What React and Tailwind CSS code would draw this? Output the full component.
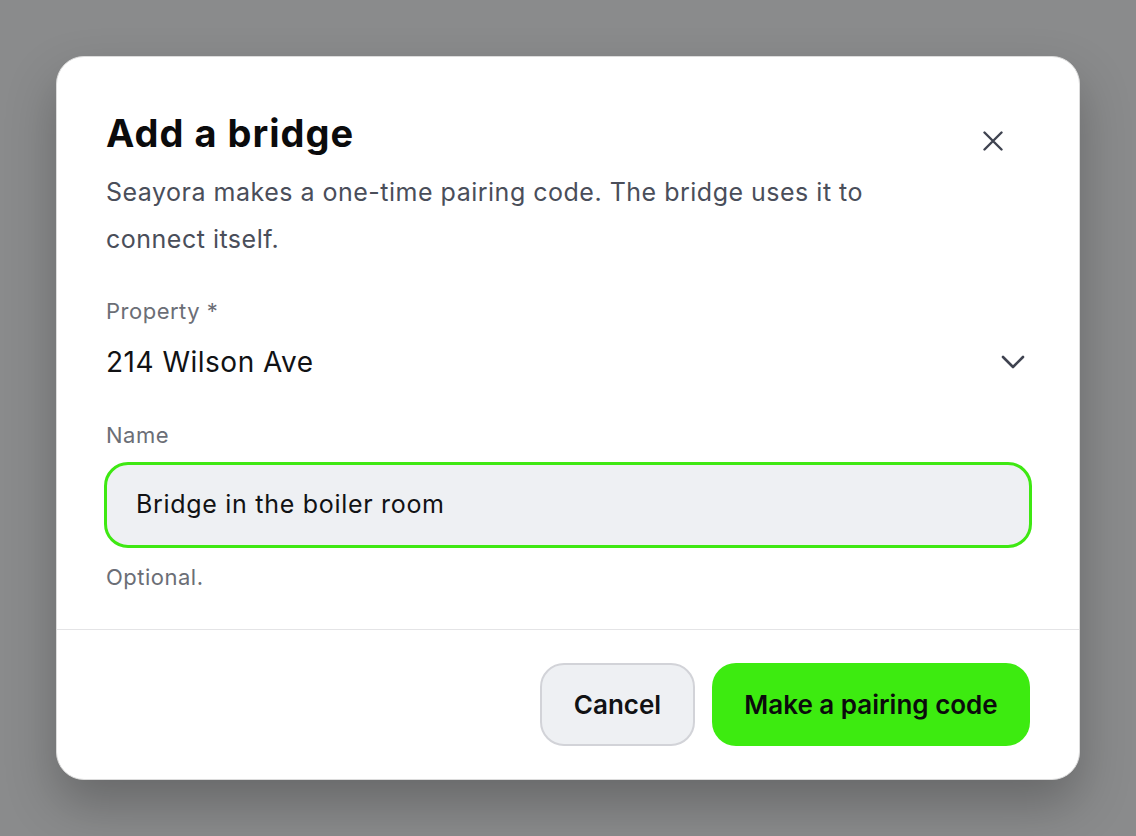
export default function App() {
  return (
    <div
      className="min-h-screen w-full bg-[#8a8b8c] flex items-start justify-center pt-[56px]"
      style={{ fontFamily: "Inter, 'Noto Sans', sans-serif" }}
    >
      <div className="w-[1024px] rounded-[28px] border border-[#dcdcdc] bg-white shadow-[0_24px_50px_rgba(0,0,0,0.25)]">
        <div className="px-[49px] pt-[52px] pb-[38px]">
          <div className="flex items-start justify-between">
            <h1 className="text-[38px] leading-[48px] font-bold text-[#0b0b0c] tracking-[1px]">
              Add a bridge
            </h1>
            <button type="button" className="mt-[22px] mr-[27px] text-[#3f4350]">
              <svg width="20" height="20" viewBox="0 0 20 20" fill="none">
                <path d="M1.5 1.5L18.5 18.5M18.5 1.5L1.5 18.5" stroke="currentColor" strokeWidth="2.4" strokeLinecap="round" />
              </svg>
            </button>
          </div>
          <p className="mt-[12px] max-w-[800px] text-[25px] leading-[47px] tracking-[0.5px] text-[#4a4e5a]">
            Seayora makes a one-time pairing code. The bridge uses it to connect itself.
          </p>

          <div className="mt-[34px] text-[22px] leading-[28px] tracking-[0.5px] text-[#6b6e76]">Property *</div>
          <div className="mt-[19px] flex items-center justify-between">
            <span className="text-[28px] leading-[36px] tracking-[0.5px] text-[#111214]">214 Wilson Ave</span>
            <svg width="24" height="14" viewBox="0 0 24 14" fill="none" className="mr-[5px] text-[#3f4350]">
              <path d="M2 2L12 12L22 2" stroke="currentColor" strokeWidth="2.6" strokeLinecap="round" strokeLinejoin="round" />
            </svg>
          </div>

          <div className="mt-[41px] text-[22px] leading-[28px] tracking-[0.5px] text-[#6b6e76]">Name</div>
          <div className="mt-[13px] -mx-[2px] h-[86px] flex items-center rounded-[24px] border-[3px] border-[#3ee812] bg-[#eef0f3] px-[29px]">
            <span className="text-[25px] tracking-[0.7px] text-[#111214]">Bridge in the boiler room</span>
          </div>
          <div className="mt-[15px] text-[22px] leading-[28px] tracking-[0.5px] text-[#6b6e76]">Optional.</div>
        </div>

        <div className="border-t border-[#e4e4e6] px-[49px] pt-[33px] pb-[33px] flex justify-end gap-[17px]">
          <button
            type="button"
            className="h-[83px] w-[155px] rounded-[24px] border-2 border-[#d2d3d8] bg-[#eef0f3] text-[26px] font-semibold text-[#111214]"
          >
            Cancel
          </button>
          <button
            type="button"
            className="h-[83px] w-[318px] rounded-[24px] bg-[#3deb10] text-[26px] font-semibold text-[#0b0b0c]"
          >
            Make a pairing code
          </button>
        </div>
      </div>
    </div>
  );
}
